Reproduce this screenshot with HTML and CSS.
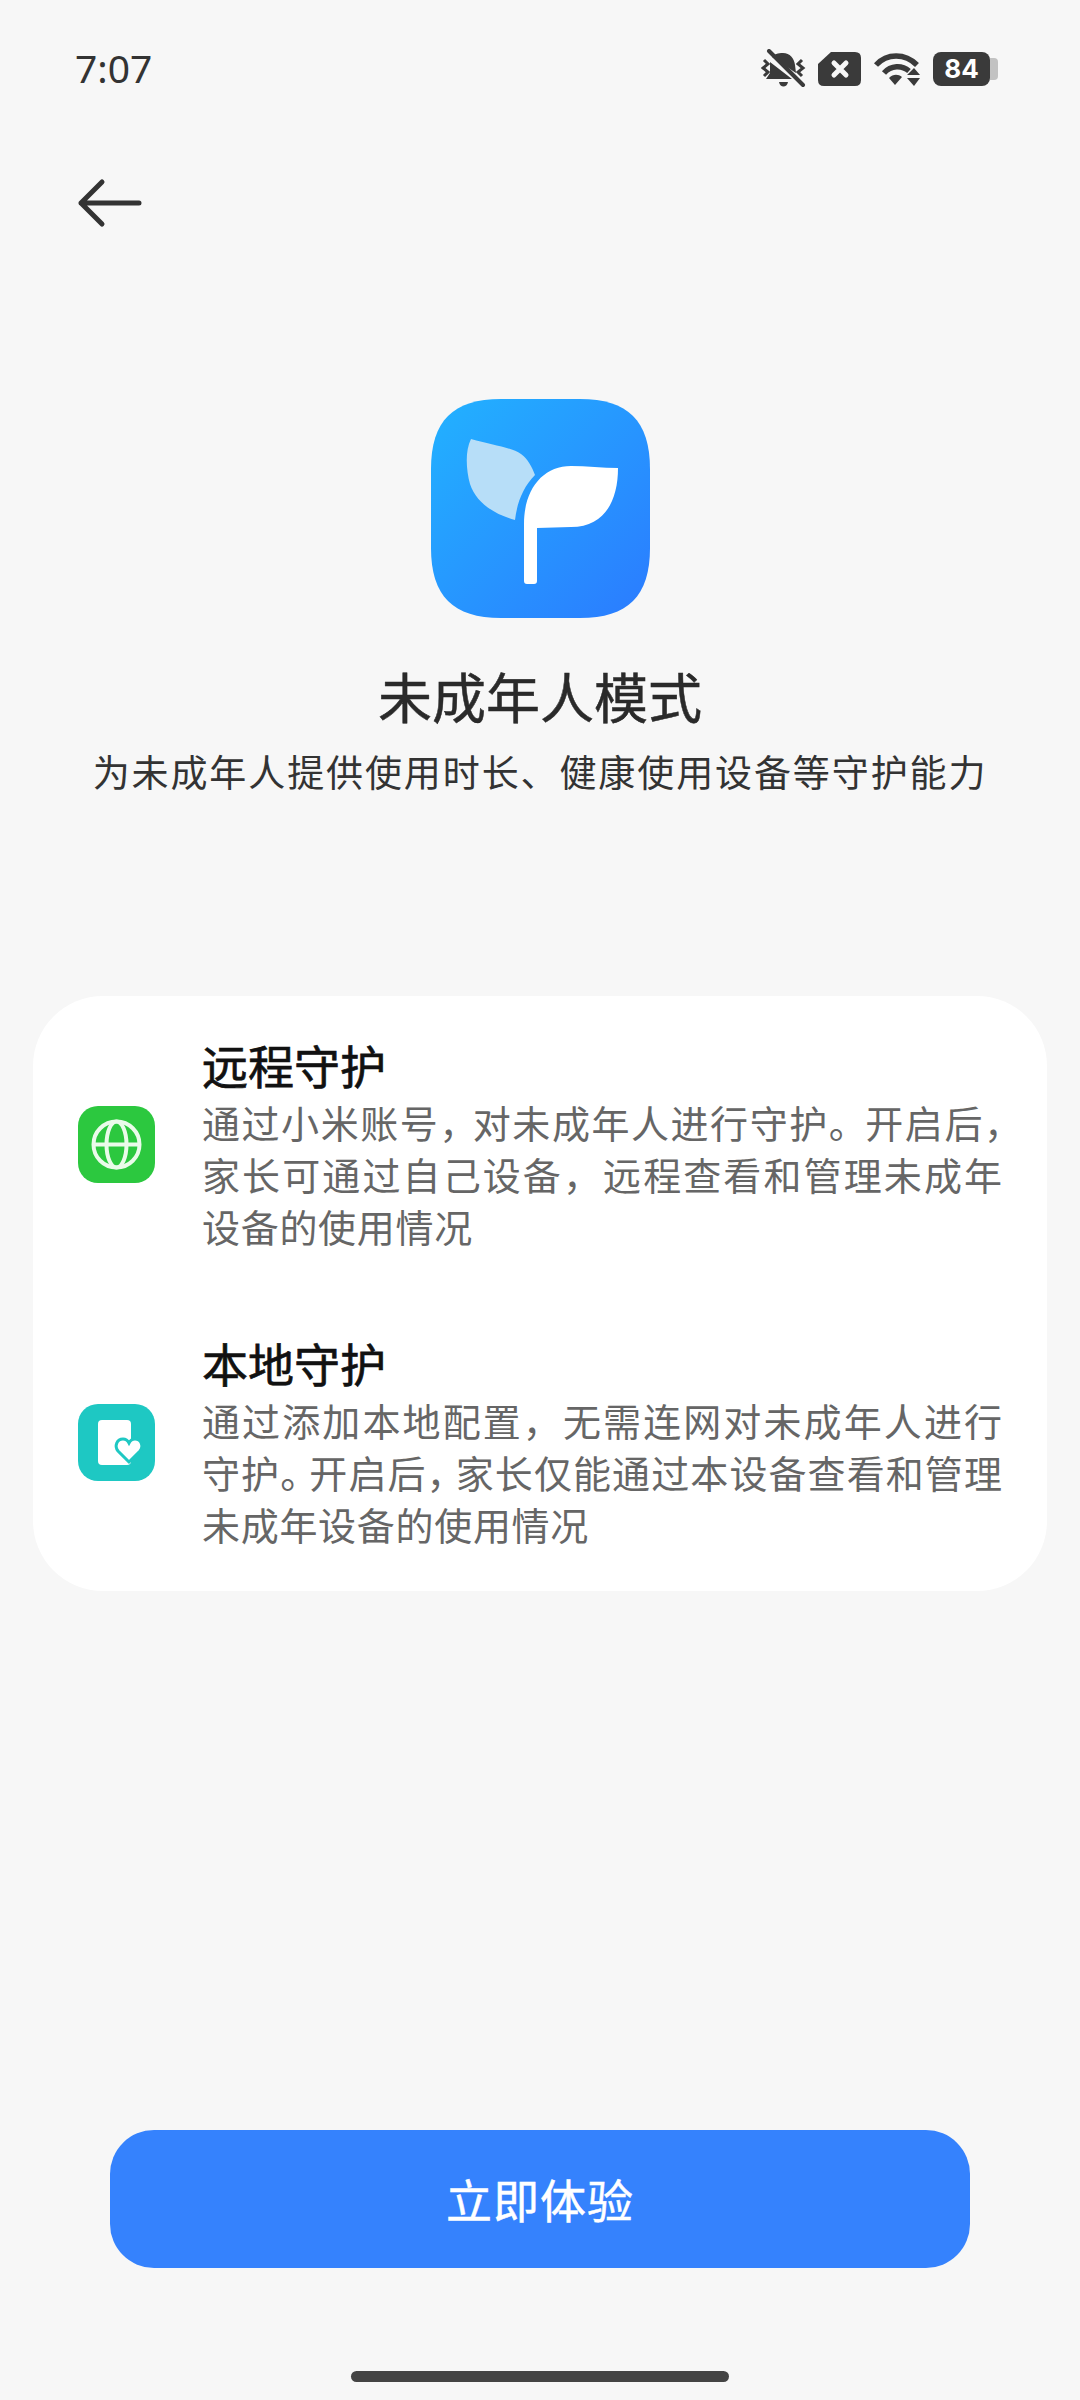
FILE: index.html

```html
<!DOCTYPE html>
<html lang="zh-CN">
<head>
  <meta charset="UTF-8" />
  <meta name="viewport" content="width=device-width, initial-scale=1.0" />
  <title>未成年人模式</title>
  <link rel="stylesheet" href="styles.css">
</head>
<body>
  <div class="page">
    <div class="statusbar">
      <span class="time">7:07</span>
      <div class="status-icons">
        <svg width="45" height="40" viewBox="0 0 45 40">
          <path d="M22 4C29 4 33 9 34 16L35 24L11 8C13 5 17 4 22 4ZM9 13L31 30H5L9 24ZM18 33H27C26 39 19 39 18 33Z" fill="#3a3a3a"/>
          <path d="M8 2L42 36" stroke="#3a3a3a" stroke-width="4" stroke-linecap="round"/>
          <path d="M3 11L7 15L2 19L7 23L3 27M41 11L37 15L42 19L37 23L41 27" stroke="#3a3a3a" stroke-width="3" fill="none"/>
        </svg>
        <svg width="43" height="34" viewBox="0 0 43 34">
          <path d="M13 0H37Q43 0 43 6V28Q43 34 37 34H6Q0 34 0 28V12Z" fill="#3a3a3a"/>
          <path d="M16 11L28 23M28 11L16 23" stroke="#f7f7f7" stroke-width="5" stroke-linecap="round"/>
        </svg>
        <svg width="48" height="34" viewBox="0 0 48 34">
          <path d="M3 13C14 1 32 1 44 13" stroke="#3a3a3a" stroke-width="5.5" fill="none"/>
          <path d="M11 21C18 13 29 13 36 19" stroke="#3a3a3a" stroke-width="5.5" fill="none"/>
          <path d="M16 26C20 22 25 22 29 25L22 33Z" fill="#3a3a3a"/>
          <path d="M34 23L41 16L47 23ZM34 26H47L41 34Z" fill="#3a3a3a"/>
        </svg>
        <div class="battery">
          <span class="battery-level">84</span>
          <span class="battery-rest"></span>
        </div>
      </div>
    </div>

    <div class="nav">
      <svg width="66" height="50" viewBox="0 0 66 50">
        <path d="M26 4L5 25L26 46M5 25H63" stroke="#333" stroke-width="5" fill="none" stroke-linecap="round" stroke-linejoin="round"/>
      </svg>
    </div>

    <div class="hero">
      <svg class="hero-icon" width="219" height="219" viewBox="0 0 219 219">
        <defs>
          <linearGradient id="appBg" x1="0" y1="0" x2="1" y2="1">
            <stop offset="0" stop-color="#22b2ff"/>
            <stop offset="1" stop-color="#2b7bff"/>
          </linearGradient>
        </defs>
        <path d="M70 0H149C197 0 219 22 219 70V149C219 197 197 219 149 219H70C22 219 0 197 0 149V70C0 22 22 0 70 0Z" fill="url(#appBg)"/>
        <path d="M40 40C60 46 80 48 90 55C97 60 101 68 104 76C92 88 86 104 84 121C62 115 45 103 39 85C35 70 34 52 40 40Z" fill="#b7def8"/>
        <path d="M93 182V125C93 90 112 67 140 67C155 67 172 69 187 69C187 100 175 128 140 128L106 129V182Q106 185 103 185H96Q93 185 93 182Z" fill="#fff"/>
      </svg>
      <h1>未成年人模式</h1>
      <p>为未成年人提供使用时长、健康使用设备等守护能力</p>
    </div>

    <div class="card">
      <div class="item">
        <svg class="item-icon" width="77" height="77" viewBox="0 0 77 77">
          <rect width="77" height="77" rx="20" fill="#2cc83f"/>
          <g stroke="#eafbea" stroke-width="4" fill="none">
            <circle cx="38.5" cy="38.5" r="23"/>
            <ellipse cx="38.5" cy="38.5" rx="10" ry="23"/>
            <path d="M16 38.5H61"/>
          </g>
        </svg>
        <div class="item-text">
          <h2>远程守护</h2>
          <p>
            <span class="line">通过小米账号<span class="comma">，</span>对未成年人进行守护<span class="stop">。</span>开启后<span class="end">，</span></span>
            <span class="line">家长可通过自己设备，远程查看和管理未成年</span>
            <span class="last">设备的使用情况</span>
          </p>
        </div>
      </div>
      <div class="item">
        <svg class="item-icon" width="77" height="77" viewBox="0 0 77 77">
          <rect width="77" height="77" rx="20" fill="#1ec8c3"/>
          <rect x="20" y="16" width="33" height="45" rx="4" fill="#fff"/>
          <path d="M51 58L40 47C36 42 39 35 45 35C48 35 50 37 51 39C52 37 54 35 57 35C63 35 66 42 62 47Z" fill="#fff" stroke="#1ec8c3" stroke-width="3"/>
        </svg>
        <div class="item-text">
          <h2>本地守护</h2>
          <p>
            <span class="line">通过添加本地配置，无需连网对未成年人进行</span>
            <span class="line">守护<span class="tight">。</span>开启后<span class="tight">，</span>家长仅能通过本设备查看和管理</span>
            <span class="last">未成年设备的使用情况</span>
          </p>
        </div>
      </div>
    </div>

    <button class="try-btn" type="button">立即体验</button>
    <div class="homebar"></div>
  </div>
</body>
</html>
```

FILE: styles.css

```css
body {
  margin: 0;
  background-color: #f7f7f7;
  font-family: "Noto Sans CJK SC", "Noto Sans", sans-serif;
}
.page {
  height: 2400px;
  display: flex;
  flex-direction: column;
}
.statusbar {
  height: 138px;
  padding: 0 82px 0 75px;
  display: flex;
  justify-content: space-between;
  align-items: center;
  box-sizing: border-box;
}
.time {
  padding-bottom: 3px;
  font-family: "Noto Sans", sans-serif;
  font-size: 39px;
  color: #333;
}
.status-icons {
  display: flex;
  align-items: center;
  gap: 12px;
}
.battery {
  display: flex;
  align-items: center;
}
.battery-level {
  width: 57px;
  height: 34px;
  line-height: 34px;
  background: #3a3a3a;
  color: #fff;
  border-radius: 8px;
  font-family: "Inter", sans-serif;
  font-size: 26px;
  font-weight: 700;
  text-align: center;
}
.battery-rest {
  width: 8px;
  height: 22px;
  background: #c2c2c2;
  border-radius: 0 4px 4px 0;
}
.nav {
  margin-top: 40px;
  padding-left: 76px;
  height: 50px;
}
.hero {
  margin-top: 171px;
  display: flex;
  flex-direction: column;
  align-items: center;
}
.hero h1 {
  margin: 38px 0 0;
  font-size: 54px;
  line-height: 80px;
  font-weight: 400;
  color: #2a2a2a;
  -webkit-text-stroke: 0.5px #2a2a2a;
}
.hero p {
  margin: 8px 0 0;
  font-size: 37px;
  line-height: 54px;
  letter-spacing: 1.9px;
  color: #333;
}
.card {
  margin: 198px 33px 0;
  padding: 40px 0 41px;
  background: #fff;
  border-radius: 70px;
  display: flex;
  flex-direction: column;
  gap: 82px;
}
.item {
  display: flex;
  align-items: center;
  padding: 0 0 0 45px;
}
.item-icon {
  flex-shrink: 0;
  margin-right: 47px;
}
.item-text h2 {
  margin: 0 0 4px;
  font-size: 46px;
  line-height: 56px;
  font-weight: 400;
  color: #111;
  -webkit-text-stroke: 0.7px #111;
}
.item-text p {
  margin: 0;
  font-size: 38px;
  line-height: 52px;
  color: #666;
}
.line {
  display: block;
  width: 800px;
  text-align: justify;
  text-align-last: justify;
}
.last {
  display: block;
  letter-spacing: 0.7px;
}
/* punctuation gets squeezed on the full lines */
.comma {
  letter-spacing: -6px;
}
.stop {
  letter-spacing: -3px;
}
.end {
  letter-spacing: -20px;
}
.tight {
  letter-spacing: -10px;
}
.try-btn {
  margin: auto 110px 0;
  padding-bottom: 4px;
  height: 138px;
  background: #3582fd;
  color: #fff;
  border: none;
  border-radius: 44px;
  font-family: inherit;
  font-size: 46px;
  letter-spacing: 1px;
  -webkit-text-stroke: 0.5px #fff;
}
.homebar {
  margin: 103px auto 18px;
  width: 378px;
  height: 11px;
  background: #444;
  border-radius: 6px;
}
```
